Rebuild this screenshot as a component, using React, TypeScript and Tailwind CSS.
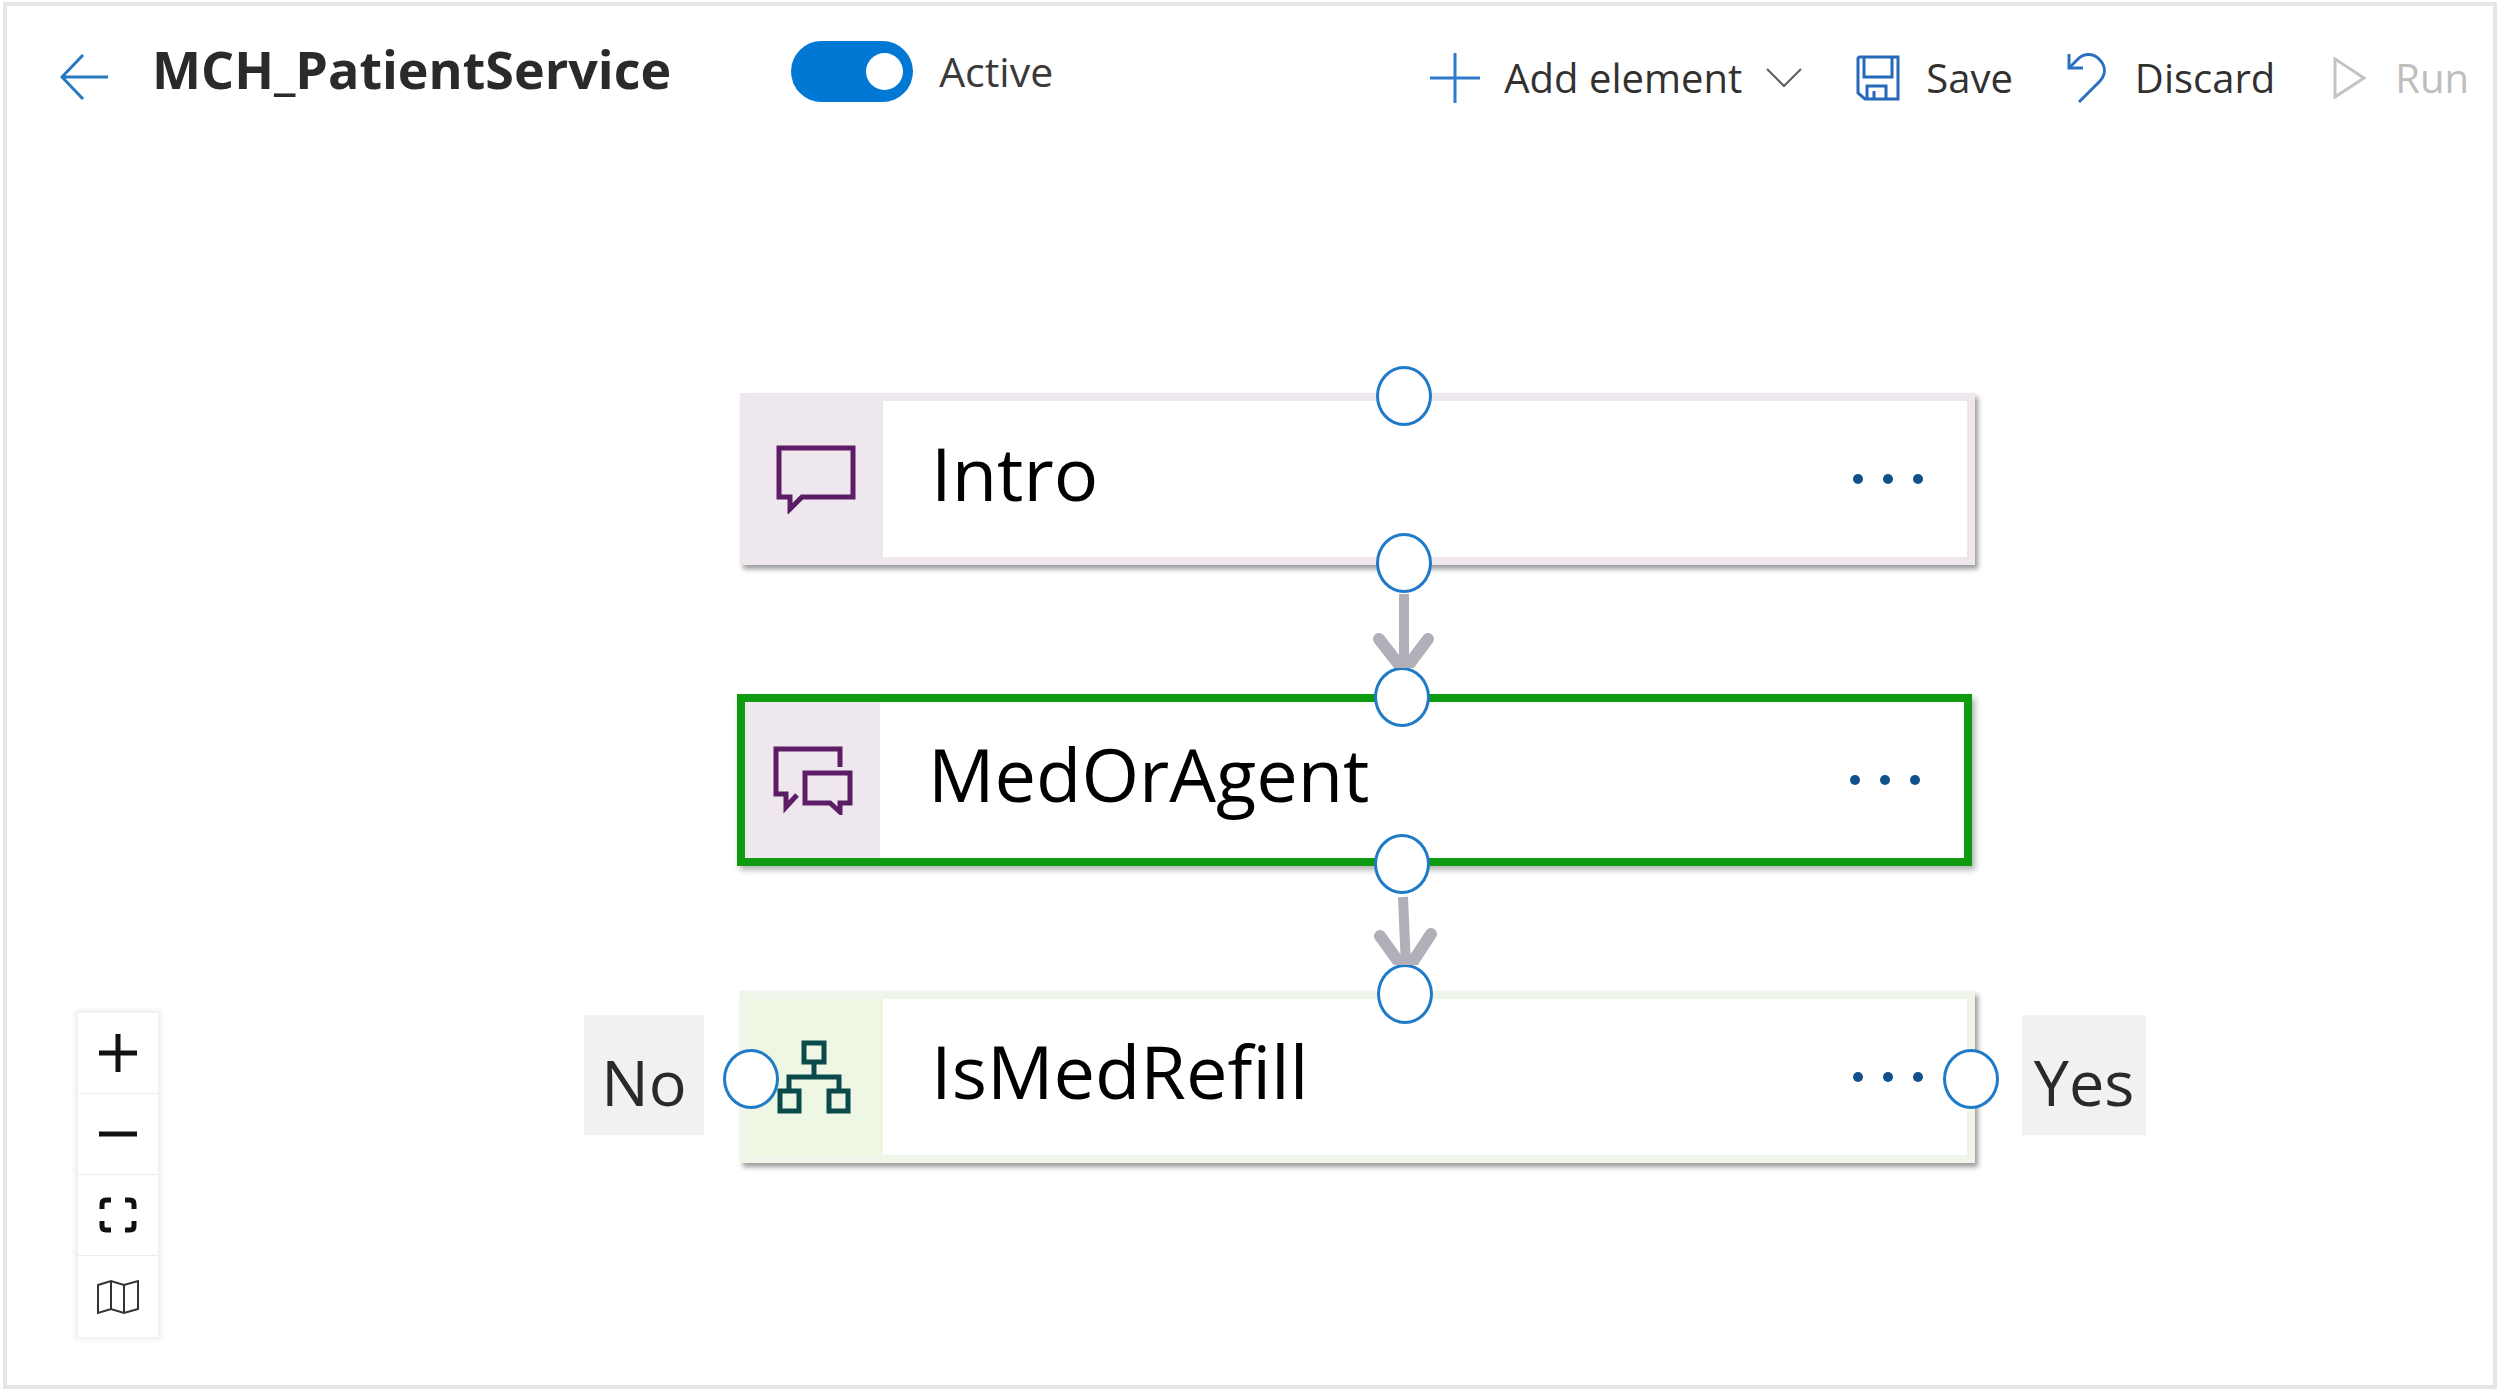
import type { ReactNode } from "react";

type PortProps = { place: string; label: string };

function Port({ place, label }: PortProps) {
  return (
    <button
      type="button"
      aria-label={label}
      className={`absolute h-[60px] w-[56px] -translate-x-1/2 -translate-y-1/2 rounded-[50%] border-[3px] border-[#1f7ac8] bg-white ${place}`}
    />
  );
}

type NodeProps = {
  title: string;
  place: string;
  frame: string;
  tint: string;
  icon: ReactNode;
  children: ReactNode;
};

function FlowNode({ title, place, frame, tint, icon, children }: NodeProps) {
  return (
    <article
      className={`absolute flex h-[172px] w-[1235px] border-8 bg-white ${place} ${frame}`}
    >
      <div className={`flex w-[135px] shrink-0 items-center justify-center ${tint}`}>{icon}</div>
      <div className="flex flex-1 items-center justify-between pr-9 pl-12">
        <h2 className="pb-3 text-[74px] leading-none text-black">{title}</h2>
        <button type="button" aria-label={`More options for ${title}`} className="flex gap-5 p-2">
          <span className="size-[10px] rounded-full bg-[#10518c]" />
          <span className="size-[10px] rounded-full bg-[#10518c]" />
          <span className="size-[10px] rounded-full bg-[#10518c]" />
        </button>
      </div>
      {children}
    </article>
  );
}

function BranchLabel({ text, place }: { text: string; place: string }) {
  return (
    <div
      className={`absolute flex h-[120px] items-center justify-center bg-[#f2f1f0] pt-3 text-[63px] leading-none text-[#2b2a29] ${place}`}
    >
      {text}
    </div>
  );
}

const MessageIcon = (
  <svg width="80" height="70" viewBox="0 0 80 70" fill="none" stroke="#5c1d66" strokeWidth="5">
    <path d="M3 4H77V53H26L14 65V53H3Z" />
  </svg>
);

const QuestionIcon = (
  <svg width="80" height="70" viewBox="0 0 80 70" fill="none" stroke="#5c1d66" strokeWidth="5">
    <path d="M67 22V4H3V49H13V62L24 50" />
    <path d="M32 28H77V58H67V67L57 58H32Z" />
  </svg>
);

const ConditionIcon = (
  <svg className="mr-1" width="74" height="74" viewBox="0 0 74 74" fill="none" stroke="#0b4a4a" strokeWidth="5">
    <path d="M27 3H47V22H27Z M3 51H22V71H3Z M52 51H71V71H52Z" />
    <path d="M37 22V36M12 51V37H62V51" />
  </svg>
);

function CommandBar() {
  return (
    <header className="flex justify-between">
      <div className="flex h-[130px] items-center pl-[53px]">
        <button type="button" aria-label="Back" className="pt-3">
          <svg width="48" height="46" viewBox="0 0 48 46" fill="none" stroke="#2878bf" strokeWidth="3">
            <path d="M48 23H2M23 1L2 23L23 45" />
          </svg>
        </button>
        <h1 className="ml-11 pb-1 text-[52px] leading-none font-bold text-[#2b2a29]">MCH_PatientService</h1>
        <label className="ml-[120px] flex items-center gap-[26px] text-[41px] leading-none text-[#3b3a39]">
          <span className="relative flex">
            <input
              type="checkbox"
              role="switch"
              defaultChecked
              className="peer h-[61px] w-[122px] appearance-none rounded-full bg-[#8a8886] checked:bg-[#0078d4]"
            />
            <span className="pointer-events-none absolute top-3 left-3 size-[37px] rounded-full bg-white peer-checked:right-[10px] peer-checked:left-auto" />
          </span>
          Active
        </label>
      </div>

      <nav aria-label="Commands" className="flex h-[130px] items-center gap-[54px] pt-[14px] pr-6 text-[40px] leading-none text-[#323130]">
        <button type="button" className="flex items-center">
          <svg width="50" height="50" viewBox="0 0 50 50" fill="none" stroke="#2f7bcb" strokeWidth="3">
            <path d="M25 0V50M0 25H50" />
          </svg>
          <span className="ml-6">Add element</span>
          <svg className="ml-6" width="36" height="20" viewBox="0 0 36 20" fill="none" stroke="#605e5c" strokeWidth="2">
            <path d="M1 1L18 18L35 1" />
          </svg>
        </button>
        <button type="button" className="flex items-center gap-[26px]">
          <svg width="44" height="46" viewBox="0 0 44 46" fill="none" stroke="#2669b8" strokeWidth="3">
            <path d="M2 4Q2 2 4 2H42V44H9L2 38Z" />
            <path d="M8 2V22H36V2M11 44V31H30V44M18 44V36" />
          </svg>
          Save
        </button>
        <button type="button" className="flex items-center gap-7">
          <svg width="40" height="50" viewBox="0 0 40 50" fill="none" stroke="#2b6fc0" strokeWidth="3">
            <path d="M2 1V15H16" />
            <path d="M2 15L11 6C17 0 26 0 32 6C39 13 39 21 33 28L12 49" />
          </svg>
          Discard
        </button>
        <button type="button" disabled className="ml-1 flex items-center gap-7 text-[#c0bebc]">
          <svg width="34" height="46" viewBox="0 0 34 46" fill="none" stroke="#c4c4c4" strokeWidth="3">
            <path d="M2 4V42L31 23Z" />
          </svg>
          Run
        </button>
      </nav>
    </header>
  );
}

function ZoomControls() {
  const cell = "flex h-[81px] w-full items-center justify-center";
  return (
    <div
      role="group"
      aria-label="Canvas controls"
      className="absolute bottom-12 left-[71px] w-20 divide-y divide-[#ececec] bg-white shadow-[0_0_5px_3px_rgba(0,0,0,0.07)]"
    >
      <button type="button" aria-label="Zoom in" className={cell}>
        <svg width="38" height="38" viewBox="0 0 38 38" stroke="#111" strokeWidth="5">
          <path d="M19 0V38M0 19H38" />
        </svg>
      </button>
      <button type="button" aria-label="Zoom out" className={cell}>
        <svg width="38" height="38" viewBox="0 0 38 38" stroke="#111" strokeWidth="5">
          <path d="M0 19H38" />
        </svg>
      </button>
      <button type="button" aria-label="Fit to screen" className={cell}>
        <svg width="38" height="36" viewBox="0 0 38 36" fill="none" stroke="#111" strokeWidth="5">
          <path d="M3 12V7Q3 3 7 3H12M26 3H31Q35 3 35 7V12M35 24V29Q35 33 31 33H26M12 33H7Q3 33 3 29V24" />
        </svg>
      </button>
      <button type="button" aria-label="Show map" className={cell}>
        <svg width="42" height="36" viewBox="0 0 42 36" fill="none" stroke="#333" strokeWidth="2">
          <path d="M1 6L14 2L27 6L41 2V30L27 34L14 30L1 34ZM14 2V30M27 6V34" />
        </svg>
      </button>
    </div>
  );
}

function Canvas() {
  return (
    <main className="relative flex-1">
      <FlowNode
        title="Intro"
        place="left-[733px] top-[257px]"
        frame="border-[#eee8ee] shadow-[3px_4px_5px_rgba(0,0,0,0.4)]"
        tint="bg-[#eee8ee]"
        icon={MessageIcon}
      >
        <Port place="left-[656px] top-[-5px]" label="Intro input" />
        <Port place="left-[656px] top-[162px]" label="Intro output" />
      </FlowNode>
      <FlowNode
        title="MedOrAgent"
        place="left-[730px] top-[558px]"
        frame="border-[#0f9b0f] shadow-[3px_4px_6px_rgba(0,0,0,0.3)]"
        tint="bg-[#eee8ee]"
        icon={QuestionIcon}
      >
        <Port place="left-[657px] top-[-5px]" label="MedOrAgent input" />
        <Port place="left-[657px] top-[162px]" label="MedOrAgent output" />
      </FlowNode>
      <FlowNode
        title="IsMedRefill"
        place="left-[733px] top-[855px]"
        frame="border-[#eff6e9] shadow-[3px_4px_5px_rgba(0,0,0,0.4)]"
        tint="bg-[#edf7e4]"
        icon={ConditionIcon}
      >
        <Port place="left-[657px] top-[-5px]" label="IsMedRefill input" />
        <Port place="left-[3px] top-[80px]" label="No branch" />
        <Port place="left-[1223px] top-[80px]" label="Yes branch" />
      </FlowNode>
      <BranchLabel text="No" place="left-[577px] top-[879px] w-[120px]" />
      <BranchLabel text="Yes" place="left-[2015px] top-[879px] w-[124px]" />
      <svg
        aria-hidden="true"
        className="pointer-events-none absolute top-[457px] left-[1360px]"
        width="76"
        height="75"
        viewBox="0 0 76 75"
        fill="none"
        stroke="#b1b0b8"
      >
        <path d="M37 1V75" strokeWidth="10" />
        <path d="M12 46L37 78L61 46" strokeWidth="12" strokeLinecap="round" />
      </svg>
      <svg
        aria-hidden="true"
        className="pointer-events-none absolute top-[759px] left-[1360px]"
        width="76"
        height="70"
        viewBox="0 0 76 70"
        fill="none"
        stroke="#b1b0b8"
      >
        <path d="M36 2L39 72" strokeWidth="10" />
        <path d="M13 41L39 77L64 39" strokeWidth="12" strokeLinecap="round" />
      </svg>
      <ZoomControls />
    </main>
  );
}

export default function App() {
  return (
    <div className="flex min-h-screen bg-white p-[3px] pt-[2px] font-['Open_Sans',sans-serif]">
      <div className="flex flex-1 flex-col border-4 border-[#e6e6e6]">
        <CommandBar />
        <Canvas />
      </div>
    </div>
  );
}
